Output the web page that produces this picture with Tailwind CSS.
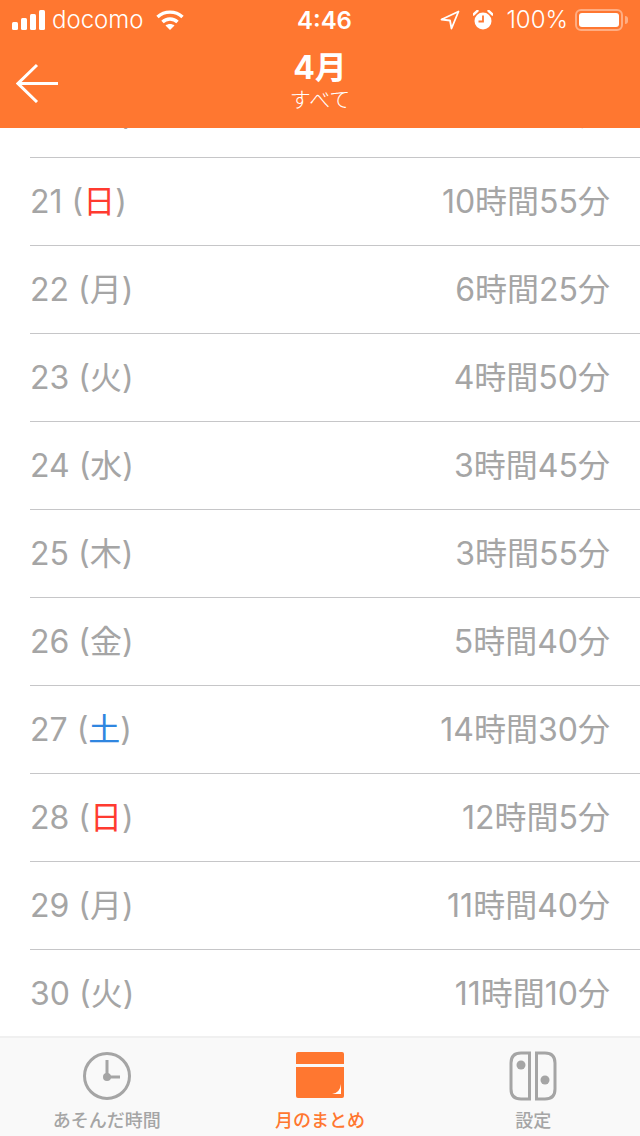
<!DOCTYPE html>
<html lang="ja">
<head>
    <meta charset="UTF-8">
    <meta name="viewport" content="width=device-width, initial-scale=1.0">
    <title>月のまとめ</title>
    <script src="https://cdn.jsdelivr.net/npm/@tailwindcss/browser@4"></script>
</head>
<body class="w-[640px] h-[1136px] overflow-hidden flex flex-col bg-white font-['Inter','Noto_Sans_CJK_JP',sans-serif]">
    <!-- Header -->
    <header class="h-[128px] shrink-0 bg-[#ff7730] text-white relative z-10">
        <div class="h-[40px] relative flex items-center justify-between pl-[12px] pr-[12px]">
            <div class="flex items-center">
                <svg width="33" height="20" viewBox="0 0 33 20" fill="#fff"><rect x="0" y="12" width="6" height="8" rx="1.5"/><rect x="9" y="8" width="6" height="12" rx="1.5"/><rect x="18" y="4" width="6" height="16" rx="1.5"/><rect x="27" y="0" width="6" height="20" rx="1.5"/></svg>
                <span class="ml-[7px] text-[24px] leading-none font-light">docomo</span>
                <svg class="ml-[12px]" width="28" height="20" viewBox="0 0 28 20" fill="none" stroke="#fff" stroke-width="3.4"><path d="M1.5 7 C8.5 0.5 19.5 0.5 26.5 7"/><path d="M6.5 12 C10.5 8 17.5 8 21.5 12"/><path d="M14 20 L9.5 15.5 C12 13.5 16 13.5 18.5 15.5 Z" fill="#fff" stroke="none"/></svg>
            </div>
            <span class="absolute left-[297px] top-[8px] text-[24px] leading-[26px] font-semibold">4:46</span>
            <div class="flex items-center">
                <svg width="20" height="20" viewBox="0 0 20 20" fill="none" stroke="#fff" stroke-width="1.8" stroke-linejoin="round"><path d="M18.5 1.5 L1.5 9.5 L10 10.5 L11.5 18.5 Z"/></svg>
                <svg class="ml-[13px]" width="20" height="20" viewBox="0 0 20 20"><circle cx="10" cy="11" r="8.5" fill="#fff"/><path d="M10 5.5 V11.5 H5.5" fill="none" stroke="#ff7730" stroke-width="1.8"/><path d="M0.5 4.5 L4.5 0.8 M19.5 4.5 L15.5 0.8" stroke="#fff" stroke-width="2.4" stroke-linecap="round"/></svg>
                <span class="ml-[13px] text-[24px] leading-none font-light">100%</span>
                <div class="ml-[7px] w-[48px] h-[22px] rounded-[6px] border-2 border-white/40 p-[2px]">
                    <div class="h-full bg-white rounded-[3px]"></div>
                </div>
                <div class="ml-[2px] w-[3px] h-[8px] rounded-r-full bg-white/40"></div>
            </div>
        </div>
        <div class="h-[88px] relative flex flex-col items-center">
            <h1 class="mt-[9px] text-[32px] leading-[38px] font-bold">4月</h1>
            <p class="text-[21px] leading-[26px] font-light">すべて</p>
            <svg class="absolute left-[16px] top-[23px]" width="44" height="40" viewBox="0 0 44 40" fill="none" stroke="#fff" stroke-width="3"><path d="M21 2 L2 20.5 L21 39"/><path d="M2 20.5 H42"/></svg>
        </div>
    </header>

    <!-- Day list -->
    <main class="flex-1 min-h-0 overflow-hidden">
        <div class="mt-[-58px] pl-[30px] text-[32px] text-[#a5a5a5]">
            <div class="h-[88px] pr-[30px] border-b border-[#c6c6c8] flex items-center justify-between">
                <span>20 (<span class="text-[#2f86e0]">土</span>)</span><span>9時間30分</span>
            </div>
            <div class="h-[88px] pr-[30px] border-b border-[#c6c6c8] flex items-center justify-between">
                <span>21 (<span class="text-[#ff3b30]">日</span>)</span><span>10時間55分</span>
            </div>
            <div class="h-[88px] pr-[30px] border-b border-[#c6c6c8] flex items-center justify-between">
                <span>22 (月)</span><span>6時間25分</span>
            </div>
            <div class="h-[88px] pr-[30px] border-b border-[#c6c6c8] flex items-center justify-between">
                <span>23 (火)</span><span>4時間50分</span>
            </div>
            <div class="h-[88px] pr-[30px] border-b border-[#c6c6c8] flex items-center justify-between">
                <span>24 (水)</span><span>3時間45分</span>
            </div>
            <div class="h-[88px] pr-[30px] border-b border-[#c6c6c8] flex items-center justify-between">
                <span>25 (木)</span><span>3時間55分</span>
            </div>
            <div class="h-[88px] pr-[30px] border-b border-[#c6c6c8] flex items-center justify-between">
                <span>26 (金)</span><span>5時間40分</span>
            </div>
            <div class="h-[88px] pr-[30px] border-b border-[#c6c6c8] flex items-center justify-between">
                <span>27 (<span class="text-[#2f86e0]">土</span>)</span><span>14時間30分</span>
            </div>
            <div class="h-[88px] pr-[30px] border-b border-[#c6c6c8] flex items-center justify-between">
                <span>28 (<span class="text-[#ff3b30]">日</span>)</span><span>12時間5分</span>
            </div>
            <div class="h-[88px] pr-[30px] border-b border-[#c6c6c8] flex items-center justify-between">
                <span>29 (月)</span><span>11時間40分</span>
            </div>
            <div class="h-[88px] pr-[30px] flex items-center justify-between">
                <span>30 (火)</span><span>11時間10分</span>
            </div>
        </div>
    </main>

    <!-- Tab bar -->
    <nav class="h-[100px] shrink-0 bg-[#f9f9f9] border-t-2 border-[#f0f0f0] grid grid-cols-3 text-[18px] font-medium text-[#a5a5a5]">
        <div class="flex flex-col items-center pt-[13px]">
            <svg width="50" height="50" viewBox="0 0 50 50" fill="none" stroke="#a5a5a5" stroke-width="3"><circle cx="25" cy="25" r="22.5"/><path d="M25 9 V26 H38"/><circle cx="25" cy="26" r="4" fill="#a5a5a5" stroke="none"/></svg>
            <span class="mt-[7px] leading-[26px]">あそんだ時間</span>
        </div>
        <div class="flex flex-col items-center pt-[14px] text-[#ff7730]">
            <svg width="48" height="46" viewBox="0 0 48 46"><path d="M2 0 H46 Q48 0 48 2 V12 H0 V2 Q0 0 2 0 Z" fill="#ff7730"/><path d="M0 15 H48 V44 Q48 46 46 46 H2 Q0 46 0 44 Z" fill="#ff7730"/><path d="M36 42 Q44 41 45 32 V42 Z" fill="#fff"/></svg>
            <span class="mt-[10px] leading-[26px]">月のまとめ</span>
        </div>
        <div class="flex flex-col items-center pt-[13px]">
            <svg width="48" height="50" viewBox="0 0 48 50" fill="none" stroke="#a5a5a5" stroke-width="3"><path d="M20.5 2 H12 Q2 2 2 12 V38 Q2 48 12 48 H20.5 Z"/><path d="M27.5 2 H36 Q46 2 46 12 V38 Q46 48 36 48 H27.5 Z"/><circle cx="12" cy="14" r="4.5" fill="#a5a5a5" stroke="none"/><circle cx="36" cy="29" r="4.5" fill="#a5a5a5" stroke="none"/></svg>
            <span class="mt-[7px] leading-[26px]">設定</span>
        </div>
    </nav>
</body>
</html>
